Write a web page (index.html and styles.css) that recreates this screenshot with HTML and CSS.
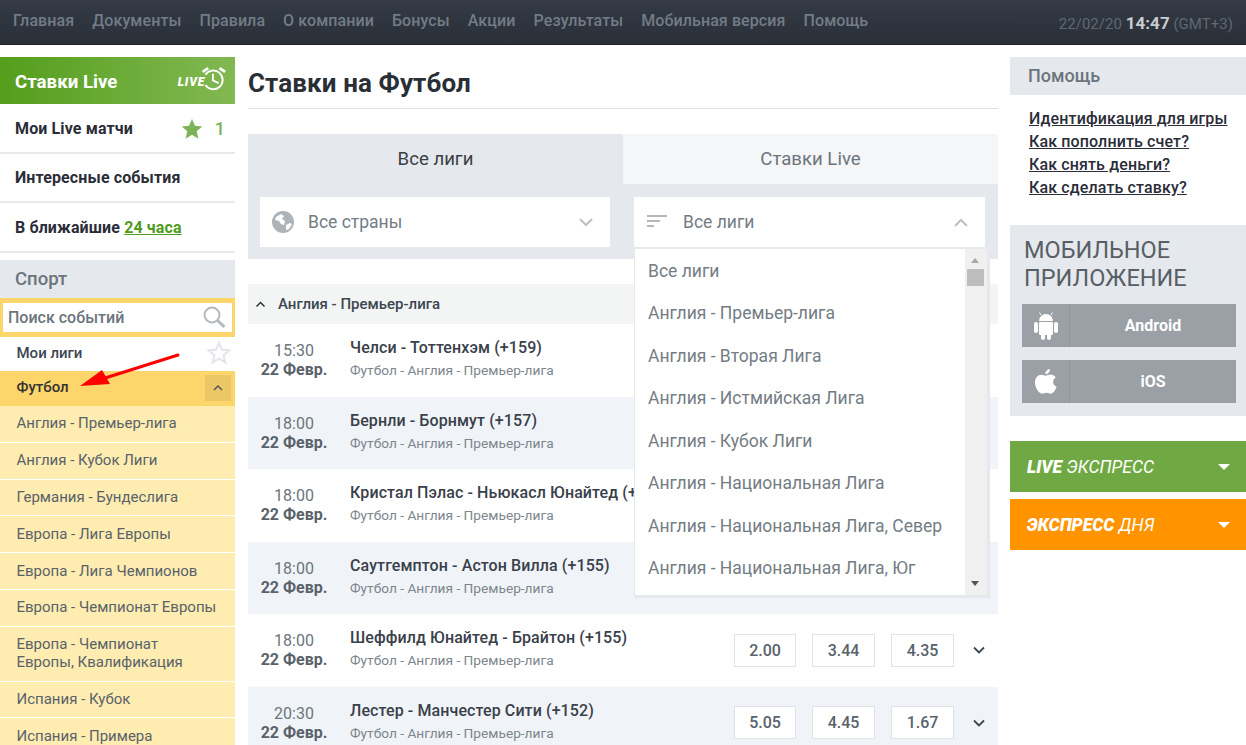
FILE: index.html
```html
<!DOCTYPE html>
<html lang="ru">
<head>
    <meta charset="UTF-8">
    <title>Ставки на Футбол</title>
    <link rel="stylesheet" href="styles.css">
</head>
<body>

    <header class="topbar">
        <nav class="topnav">
            <a>Главная</a>
            <a>Документы</a>
            <a>Правила</a>
            <a>О компании</a>
            <a>Бонусы</a>
            <a>Акции</a>
            <a>Результаты</a>
            <a>Мобильная версия</a>
            <a>Помощь</a>
        </nav>
        <div class="clock">22/02/20 <b>14:47</b> (GMT+3)</div>
    </header>

    <div class="page">

        <aside class="left">
            <div class="live-head">
                <span>Ставки Live</span>
                <span class="live-logo">
                    <i>LIVE</i>
                    <svg width="30" height="25" viewBox="0 0 32 26" fill="none" stroke="#fff">
                        <path d="M9 9A10 10 0 1 1 9 20" stroke-width="2"/>
                        <path d="M17 8v7l6 3" stroke-width="2"/>
                        <path d="M6 6l6-4M24 2l6 4" stroke-width="3"/>
                    </svg>
                </span>
            </div>
            <div class="side-row">
                <span>Мои Live матчи</span>
                <span class="side-count">
                    <svg width="22" height="21" viewBox="0 0 24 23"><path fill="#7cb356" d="M12 1l3.2 7.6 8 .7-6.1 5.3 1.9 8L12 18.3 5 22.600l1.900-8L.8 9.300l8-.7z"/></svg>
                    1
                </span>
            </div>
            <div class="side-row">Интересные события</div>
            <div class="side-row">
                <span>В ближайшие <a class="green-link">24 часа</a></span>
            </div>

            <div class="sport-head">Спорт</div>
            <div class="search">
                <div class="search-box">
                    <span>Поиск событий</span>
                    <svg width="24" height="24" viewBox="0 0 24 24" fill="none" stroke="#b4b9bd">
                        <circle cx="10" cy="10" r="7.500" stroke-width="2"/>
                        <path d="M15.500 15.500l7 6.500" stroke-width="3"/>
                    </svg>
                </div>
            </div>
            <div class="my-leagues">
                <span>Мои лиги</span>
                <svg width="26" height="25" viewBox="0 0 24 23"><path fill="#fff" stroke="#e3e6ea" stroke-width="2" d="M12 2.500l2.600 6.400 6.800.6-5.200 4.500 1.600 6.700L12 17.100l-5.800 3.600 1.600-6.700-5.200-4.500 6.800-.6z"/></svg>
            </div>
            <div class="sport-active">
                <span>Футбол</span>
                <span class="collapse">
                    <svg width="12" height="8" viewBox="0 0 12 8" fill="none" stroke="#555"><path d="M2 6l4-4 4 4" stroke-width="1.500"/></svg>
                </span>
            </div>
            <ul class="league-list">
                <li>Англия - Премьер-лига</li>
                <li>Англия - Кубок Лиги</li>
                <li>Германия - Бундеслига</li>
                <li>Европа - Лига Европы</li>
                <li>Европа - Лига Чемпионов</li>
                <li>Европа - Чемпионат Европы</li>
                <li>Европа - Чемпионат<br>Европы, Квалификация</li>
                <li>Испания - Кубок</li>
                <li>Испания - Примера</li>
            </ul>
            <svg class="red-arrow" width="110" height="40" viewBox="0 0 110 40">
                <path d="M98 3L22 27" stroke="#f00" stroke-width="3" stroke-linecap="round"/>
                <path d="M0 34L22 18 30 32z" fill="#f00"/>
            </svg>
        </aside>

        <main class="center">
            <h1>Ставки на Футбол</h1>

            <div class="tabs">
                <div class="tab tab-active">Все лиги</div>
                <div class="tab">Ставки Live</div>
            </div>

            <div class="filters">
                <div class="select">
                    <svg class="icon-globe" width="22" height="22" viewBox="0 0 22 22">
                        <circle cx="11" cy="11" r="11" fill="#aeb3b8"/>
                        <path fill="#fff" d="M4 6l5-3 3 2-2 3 3 2-1 4-3-1-2-3-4-1zM14 14l4-2 2 1-3 5-3 1z"/>
                    </svg>
                    <span class="select-text">Все страны</span>
                    <svg class="chev" width="14" height="9" viewBox="0 0 14 9" fill="none" stroke="#bcc0c4"><path d="M1 1l6 6 6-6" stroke-width="2"/></svg>
                </div>
                <div class="select">
                    <svg class="icon-lines" width="20" height="14" viewBox="0 0 20 14" fill="#b4b8bc">
                        <rect width="20" height="2"/>
                        <rect y="5" width="13" height="2"/>
                        <rect y="10" width="7" height="2"/>
                    </svg>
                    <span class="select-text">Все лиги</span>
                    <svg class="chev" width="14" height="9" viewBox="0 0 14 9" fill="none" stroke="#bcc0c4"><path d="M1 8l6-6 6 6" stroke-width="2"/></svg>
                </div>

                <div class="dropdown">
                    <ul class="dropdown-list">
                        <li>Все лиги</li>
                        <li>Англия - Премьер-лига</li>
                        <li>Англия - Вторая Лига</li>
                        <li>Англия - Истмийская Лига</li>
                        <li>Англия - Кубок Лиги</li>
                        <li>Англия - Национальная Лига</li>
                        <li>Англия - Национальная Лига, Север</li>
                        <li>Англия - Национальная Лига, Юг</li>
                    </ul>
                    <div class="scroll">
                        <span class="scroll-up"></span>
                        <span class="scroll-thumb"></span>
                        <span class="scroll-down"></span>
                    </div>
                </div>
            </div>

            <div class="group-head">
                <svg width="11" height="7" viewBox="0 0 10 7" fill="none" stroke="#333"><path d="M1 5.500l4-4 4 4" stroke-width="1.500"/></svg>
                Англия - Премьер-лига
            </div>

            <div class="match">
                <div class="match-time">15:30<b>22 Февр.</b></div>
                <div class="match-info"><b>Челси - Тоттенхэм (+159)</b><span>Футбол - Англия - Премьер-лига</span></div>
            </div>
            <div class="match match-alt">
                <div class="match-time">18:00<b>22 Февр.</b></div>
                <div class="match-info"><b>Бернли - Борнмут (+157)</b><span>Футбол - Англия - Премьер-лига</span></div>
            </div>
            <div class="match">
                <div class="match-time">18:00<b>22 Февр.</b></div>
                <div class="match-info"><b>Кристал Пэлас - Ньюкасл Юнайтед (+157)</b><span>Футбол - Англия - Премьер-лига</span></div>
            </div>
            <div class="match match-alt">
                <div class="match-time">18:00<b>22 Февр.</b></div>
                <div class="match-info"><b>Саутгемптон - Астон Вилла (+155)</b><span>Футбол - Англия - Премьер-лига</span></div>
            </div>
            <div class="match">
                <div class="match-time">18:00<b>22 Февр.</b></div>
                <div class="match-info"><b>Шеффилд Юнайтед - Брайтон (+155)</b><span>Футбол - Англия - Премьер-лига</span></div>
                <div class="odds"><span>2.00</span><span>3.44</span><span>4.35</span></div>
                <svg class="more" width="12" height="8" viewBox="0 0 12 8" fill="none" stroke="#3c4650"><path d="M1 1.500l5 5 5-5" stroke-width="1.800"/></svg>
            </div>
            <div class="match match-alt">
                <div class="match-time">20:30<b>22 Февр.</b></div>
                <div class="match-info"><b>Лестер - Манчестер Сити (+152)</b><span>Футбол - Англия - Премьер-лига</span></div>
                <div class="odds"><span>5.05</span><span>4.45</span><span>1.67</span></div>
                <svg class="more" width="12" height="8" viewBox="0 0 12 8" fill="none" stroke="#3c4650"><path d="M1 1.500l5 5 5-5" stroke-width="1.800"/></svg>
            </div>
        </main>

        <aside class="right">
            <div class="help-head">Помощь</div>
            <div class="help-links">
                <a>Идентификация для игры</a>
                <a>Как пополнить счет?</a>
                <a>Как снять деньги?</a>
                <a>Как сделать ставку?</a>
            </div>

            <div class="mobile">
                <h2>МОБИЛЬНОЕ ПРИЛОЖЕНИЕ</h2>
                <div class="app-btn">
                    <span class="app-icon">
                        <svg width="24" height="28" viewBox="0 0 24 28" fill="#fff">
                            <path d="M5 9a7 7 0 0 1 14 0z"/>
                            <path d="M7 3L5.500 .5M17 3l1.500-2.500" stroke="#fff"/>
                            <rect x="5" y="10" width="14" height="13" rx="1"/>
                            <rect y="10" width="4" height="11" rx="2"/>
                            <rect x="20" y="10" width="4" height="11" rx="2"/>
                            <rect x="7" y="20" width="4" height="8" rx="2"/>
                            <rect x="13" y="20" width="4" height="8" rx="2"/>
                        </svg>
                    </span>
                    <span class="app-name">Android</span>
                </div>
                <div class="app-btn">
                    <span class="app-icon">
                        <svg width="22" height="26" viewBox="0 0 22 26" fill="#fff">
                            <path d="M15 0c.2 2.700-2 5.200-4.700 5.200C10.100 2.700 12.400.3 15 0z"/>
                            <path d="M10.800 6.800c1.300 0 2.700-1.200 4.800-1.200 1.500 0 3.900.8 5.100 2.800-3.800 2.200-3.200 7.700.9 9.300-1.100 3-3.400 7-5.800 7-1.600 0-2.300-1-4.200-1-2 0-2.800 1-4.300 1C3.600 24.700 0 18.600 0 13.600 0 8.700 3.100 5.800 6.100 5.800c1.900 0 3.500 1 4.700 1z"/>
                        </svg>
                    </span>
                    <span class="app-name">iOS</span>
                </div>
            </div>

            <div class="promo promo-green"><span><b>LIVE</b> ЭКСПРЕСС</span><i class="caret"></i></div>
            <div class="promo promo-orange"><span><b>ЭКСПРЕСС</b> ДНЯ</span><i class="caret"></i></div>
        </aside>

    </div>

</body>
</html>
```

FILE: styles.css
```css
html, body {
    height: 745px;
    overflow: hidden;
}

body {
    margin: 0;
    background: #fff;
    font-family: Roboto, sans-serif;
    font-size: 16px;
    color: #2a2f36;
}

ul {
    list-style: none;
    margin: 0;
    padding: 0;
}


.topbar {
    height: 45px;
    display: flex;
    justify-content: space-between;
    align-items: flex-start;
    padding: 0 0 0 13px;
    background: linear-gradient(#343b44, #2a2f38);
    border-bottom: 1px solid #1e2228;
    box-sizing: border-box;
}

.topnav {
    display: flex;
    gap: 18px;
    padding-top: 11px;
    font-weight: 500;
    line-height: 19px;
    letter-spacing: 0.1px;
    color: #727c87;
}

.clock {
    margin-top: 13px;
    padding-right: 13px;
    font-size: 15px;
    line-height: 20px;
    letter-spacing: 0.03px;
    color: #5f6872;
}

.clock b {
    font-size: 17px;
    color: #c9cdd2;
}


.page {
    display: grid;
    grid-template-columns: 248px 762px 236px;
    padding-top: 12px;
}

.left {
    position: relative;
    width: 235px;
}

.live-head {
    height: 47px;
    display: flex;
    justify-content: space-between;
    align-items: center;
    padding: 0 8px 0 15px;
    background: linear-gradient(90deg, #549e1c, #82b852);
    color: #fff;
    font-size: 18.700px;
    font-weight: 700;
}

.live-head > span:first-child {
    padding-top: 2px;
}

.live-logo {
    display: flex;
    align-items: center;
    margin-bottom: 4px;
}

.live-logo i {
    font-size: 12px;
    font-weight: 900;
    letter-spacing: 0.8px;
    margin-right: -8px;
    margin-top: 6px;
}

.side-row {
    height: 49.670px;
    box-sizing: border-box;
    display: flex;
    justify-content: space-between;
    align-items: center;
    padding: 1px 10px 0 15px;
    border-bottom: 2px solid #e8e9eb;
    font-weight: 700;
    letter-spacing: 0.12px;
    color: #2b2d38;
}

.side-count {
    display: flex;
    align-items: center;
    gap: 12px;
    color: #7cb356;
    font-size: 18px;
    font-weight: 500;
}

.green-link {
    color: #4f9c1c;
    text-decoration: underline;
}

.sport-head {
    margin-top: 7px;
    height: 38px;
    line-height: 38px;
    padding-left: 15px;
    background: #e5e8ed;
    color: #6c747c;
    font-size: 18.500px;
    font-weight: 500;
}

.search {
    padding: 5px 3px;
    background: #fcd56b;
}

.search-box {
    height: 29px;
    display: flex;
    justify-content: space-between;
    align-items: center;
    padding: 0 6px 0 5px;
    background: #fff;
    color: #6c747c;
    font-weight: 500;
}

.my-leagues {
    height: 34px;
    box-sizing: border-box;
    padding: 0 3px 2px 16.500px;
    display: flex;
    justify-content: space-between;
    align-items: center;
    font-size: 15px;
    font-weight: 500;
    color: #3c4650;
}

.sport-active {
    height: 35px;
    box-sizing: border-box;
    padding: 0 4px 2px 16.500px;
    display: flex;
    justify-content: space-between;
    align-items: center;
    background: #fcd56b;
    font-size: 15px;
    font-weight: 500;
    color: #333;
}

.collapse {
    width: 26px;
    height: 26px;
    margin-top: 2px;
    display: flex;
    justify-content: center;
    align-items: center;
    background: #ecc766;
}

.league-list li {
    padding: 8.500px 10px 9.300px 16.500px;
    background: #feecb0;
    border-bottom: 1px solid #fff;
    font-size: 15px;
    line-height: 18px;
    color: #59626b;
}

.red-arrow {
    position: absolute;
    left: 80px;
    top: 295px;
}


.center {
    width: 750px;
}

h1 {
    margin: 0;
    height: 51px;
    line-height: 52px;
    font-size: 26px;
    font-weight: 700;
    letter-spacing: 0.1px;
    color: #2a2f36;
    border-bottom: 1px solid #dcdfe2;
}

.tabs {
    display: flex;
    margin-top: 25px;
}

.tab {
    flex: 1;
    height: 50px;
    line-height: 50px;
    text-align: center;
    font-size: 18.600px;
    background: #f4f6f8;
    color: #6c747c;
}

.tab-active {
    background: #e5e8ed;
    color: #3a3f46;
}

.filters {
    position: relative;
    display: grid;
    grid-template-columns: 350px 351px;
    column-gap: 24px;
    height: 75px;
    box-sizing: border-box;
    padding: 13px 13px 12px 12px;
    background: #e5e8ed;
}

.select {
    height: 50px;
    display: flex;
    align-items: center;
    gap: 13px;
    padding: 0 17px 0 13px;
    background: #fff;
    font-size: 17.500px;
    color: #747c84;
}

.icon-globe {
    margin: 0 1px 0 -1px;
}

.icon-lines {
    margin: 0 3px 0 0;
}

.select-text {
    flex: 1;
}

.dropdown {
    position: absolute;
    z-index: 2;
    left: 386px;
    top: 63px;
    width: 356px;
    height: 351px;
    box-sizing: border-box;
    display: flex;
    background: #f0f0f0;
    border: 3px solid #e5e8ed;
    border-left-width: 1px;
    border-top-width: 2px;
}

.dropdown-list {
    flex: 1;
    background: #fff;
    padding-top: 0.500px;
}

.dropdown-list li {
    height: 42.500px;
    line-height: 42.500px;
    padding-left: 13px;
    font-size: 17.500px;
    color: #747c84;
    white-space: nowrap;
}

.scroll {
    position: relative;
    width: 22px;
}

.scroll-up, .scroll-down {
    position: absolute;
    left: 6px;
    width: 0;
    height: 0;
    border-left: 4px solid transparent;
    border-right: 4px solid transparent;
}

.scroll-up {
    top: 9px;
    border-bottom: 5px solid #a6a6a6;
}

.scroll-down {
    bottom: 9px;
    border-top: 5px solid #555;
}

.scroll-thumb {
    position: absolute;
    left: 2px;
    top: 20px;
    width: 17px;
    height: 17px;
    background: #bdbdbd;
}

.group-head {
    margin-top: 25px;
    height: 40px;
    display: flex;
    align-items: center;
    gap: 12px;
    padding-left: 7px;
    background: #f3f5f5;
    font-size: 15px;
    font-weight: 500;
    color: #3c4650;
}

.match {
    height: 72.500px;
    display: flex;
    align-items: center;
    position: relative;
}

.match-alt {
    background: #f0f4f8;
}

.match-time {
    width: 92px;
    text-align: center;
    color: #6c747c;
    line-height: 19px;
}

.match-time b {
    display: block;
    color: #59626b;
}

.match-info {
    flex: 1;
    margin: 0 0 4px 10px;
    white-space: nowrap;
}

.match-info b {
    display: block;
    font-weight: 500;
    line-height: 20px;
    letter-spacing: 0.1px;
    color: #3a404a;
}

.match-info span {
    display: block;
    margin-top: 4px;
    font-size: 13.700px;
    line-height: 16px;
    color: #7d858d;
}

.odds {
    display: flex;
    gap: 16px;
    margin-right: 44px;
}

.odds span {
    width: 61px;
    height: 31px;
    line-height: 31px;
    text-align: center;
    background: #fff;
    border: 1px solid #e0e3e6;
    font-weight: 500;
    color: #59626b;
}

.odds span:first-child {
    width: 60px;
}

.more {
    position: absolute;
    right: 13px;
    top: 32px;
}


.help-head {
    height: 38px;
    line-height: 37px;
    padding-left: 18px;
    background: #e5e8ed;
    color: #6c747c;
    font-size: 18px;
    font-weight: 500;
}

.help-links {
    padding: 12px 0 0 19px;
    height: 118px;
    box-sizing: border-box;
    margin-bottom: 12px;
}

.help-links a {
    display: block;
    line-height: 23px;
    font-weight: 500;
    letter-spacing: 0.13px;
    color: #2b2d38;
    text-decoration: underline;
}

.mobile {
    height: 191px;
    box-sizing: border-box;
    padding: 11px 10px 0 12px;
    background: #e5e8ed;
}

.mobile h2 {
    margin: 0 0 12px 2px;
    width: 190px;
    font-size: 23.500px;
    font-weight: 400;
    line-height: 28px;
    color: #585f66;
}

.app-btn {
    height: 43px;
    display: flex;
    align-items: center;
    margin-bottom: 13px;
    background: #9aa0a6;
    color: #fff;
    font-weight: 700;
}

.app-icon {
    width: 47px;
    height: 100%;
    display: flex;
    justify-content: center;
    align-items: center;
    border-right: 1px solid #8e959b;
}

.app-name {
    flex: 1;
    text-align: center;
}

.promo {
    height: 51px;
    display: flex;
    justify-content: space-between;
    align-items: center;
    padding: 0 16px 0 17px;
    color: #fff;
    font-size: 17.500px;
    font-style: italic;
}

.promo-green {
    margin-top: 25px;
    background: #70a943;
}

.promo-orange {
    margin-top: 7px;
    background: #ff9300;
}

.promo b {
    font-weight: 900;
}

.caret {
    width: 0;
    height: 0;
    border-left: 6px solid transparent;
    border-right: 6px solid transparent;
    border-top: 6px solid #fff;
}
```
